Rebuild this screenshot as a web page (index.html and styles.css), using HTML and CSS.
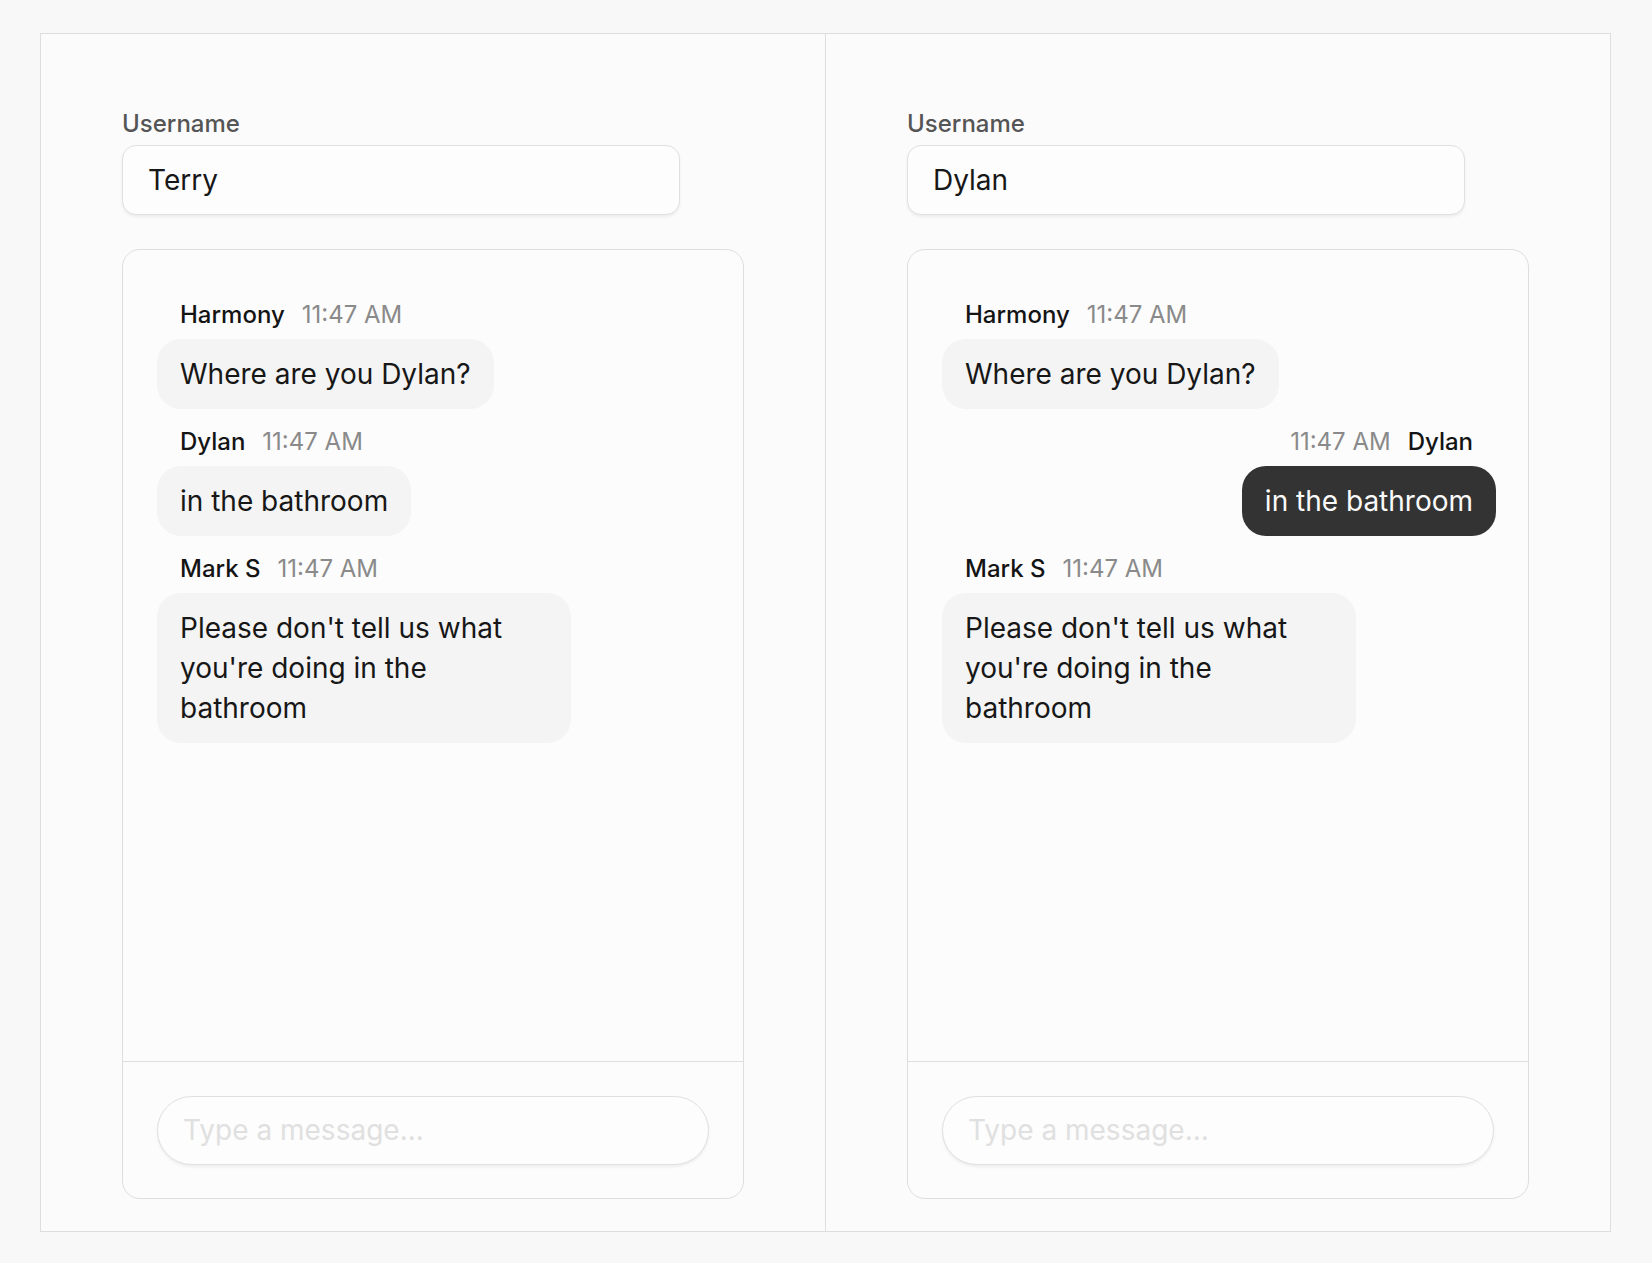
FILE: index.html
```html
<!DOCTYPE html>
<html lang="en">
<head>
<meta charset="utf-8">
<title>Chat</title>
<link rel="stylesheet" href="styles.css">
</head>
<body>
<div class="frame">
  <section class="pane">
    <label class="label">Username</label>
    <div class="username">Terry</div>
    <div class="chat">
      <div class="messages">
        <div class="msg">
          <div class="meta"><span class="name">Harmony</span><span class="time">11:47 AM</span></div>
          <div class="bubble">Where are you Dylan?</div>
        </div>
        <div class="msg">
          <div class="meta"><span class="name">Dylan</span><span class="time">11:47 AM</span></div>
          <div class="bubble">in the bathroom</div>
        </div>
        <div class="msg">
          <div class="meta"><span class="name">Mark S</span><span class="time">11:47 AM</span></div>
          <div class="bubble">Please don't tell us what you're doing in the bathroom</div>
        </div>
      </div>
      <div class="composer">
        <div class="compose-input">Type a message...</div>
      </div>
    </div>
  </section>
  <section class="pane">
    <label class="label">Username</label>
    <div class="username">Dylan</div>
    <div class="chat">
      <div class="messages">
        <div class="msg">
          <div class="meta"><span class="name">Harmony</span><span class="time">11:47 AM</span></div>
          <div class="bubble">Where are you Dylan?</div>
        </div>
        <div class="msg own">
          <div class="meta"><span class="time">11:47 AM</span><span class="name">Dylan</span></div>
          <div class="bubble">in the bathroom</div>
        </div>
        <div class="msg">
          <div class="meta"><span class="name">Mark S</span><span class="time">11:47 AM</span></div>
          <div class="bubble">Please don't tell us what you're doing in the bathroom</div>
        </div>
      </div>
      <div class="composer">
        <div class="compose-input">Type a message...</div>
      </div>
    </div>
  </section>
</div>
</body>
</html>
```

FILE: styles.css
```css
* { box-sizing: border-box; }
html, body { margin: 0; }
body {
  background: #f8f8f8;
  font-family: Inter, "Noto Sans", sans-serif;
  color: #171717;
  padding: 33px 41px 31px 40px;
}
.frame {
  display: grid;
  grid-template-columns: 785px 1fr;
  border: 1px solid #dedede;
  background: #fbfbfb;
  height: 1199px;
}
.pane {
  padding: 72px 81px 32px 81px;
  display: flex;
  flex-direction: column;
}
.pane:first-child { border-right: 1px solid #dedede; }
.label {
  display: block;
  font-size: 24px;
  line-height: 35px;
  font-weight: 500;
  color: #555;
}
.username {
  margin-top: 4px;
  width: 558px;
  height: 70px;
  border: 1px solid #e0e0e0;
  border-radius: 14px;
  background: #fdfdfd;
  box-shadow: 0 2px 3px rgba(0,0,0,0.06);
  font-size: 28px;
  line-height: 68px;
  padding: 0 25px;
  color: #171717;
}
.chat {
  margin-top: 34px;
  height: 950px;
  border: 1px solid #dedede;
  border-radius: 18px;
  background: #fcfcfc;
  display: flex;
  flex-direction: column;
}
.messages {
  flex: 1;
  padding: 47px 32px 20px 34px;
  display: flex;
  flex-direction: column;
  gap: 15px;
}
.msg {
  display: flex;
  flex-direction: column;
  align-items: flex-start;
}
.msg.own { align-items: flex-end; }
.meta {
  display: flex;
  gap: 17px;
  padding: 0 23px;
  font-size: 24px;
  line-height: 35px;
  margin-bottom: 7px;
}
.name { font-weight: 500; color: #141414; }
.time { color: #8a8a8a; }
.bubble {
  background: #f4f4f4;
  border-radius: 24px;
  padding: 15px 23px;
  font-size: 28px;
  line-height: 40px;
  max-width: 414px;
  color: #171717;
}
.own .bubble {
  background: #333333;
  color: #fafafa;
}
.composer {
  border-top: 1px solid #dedede;
  padding: 34px 34px 33px 34px;
}
.compose-input {
  height: 69px;
  border: 1px solid #e0e0e0;
  border-radius: 35px;
  background: #fdfdfd;
  box-shadow: 0 2px 3px rgba(0,0,0,0.06);
  padding: 0 25px;
  font-size: 28px;
  line-height: 67px;
  color: #e0e0e0;
}
```
